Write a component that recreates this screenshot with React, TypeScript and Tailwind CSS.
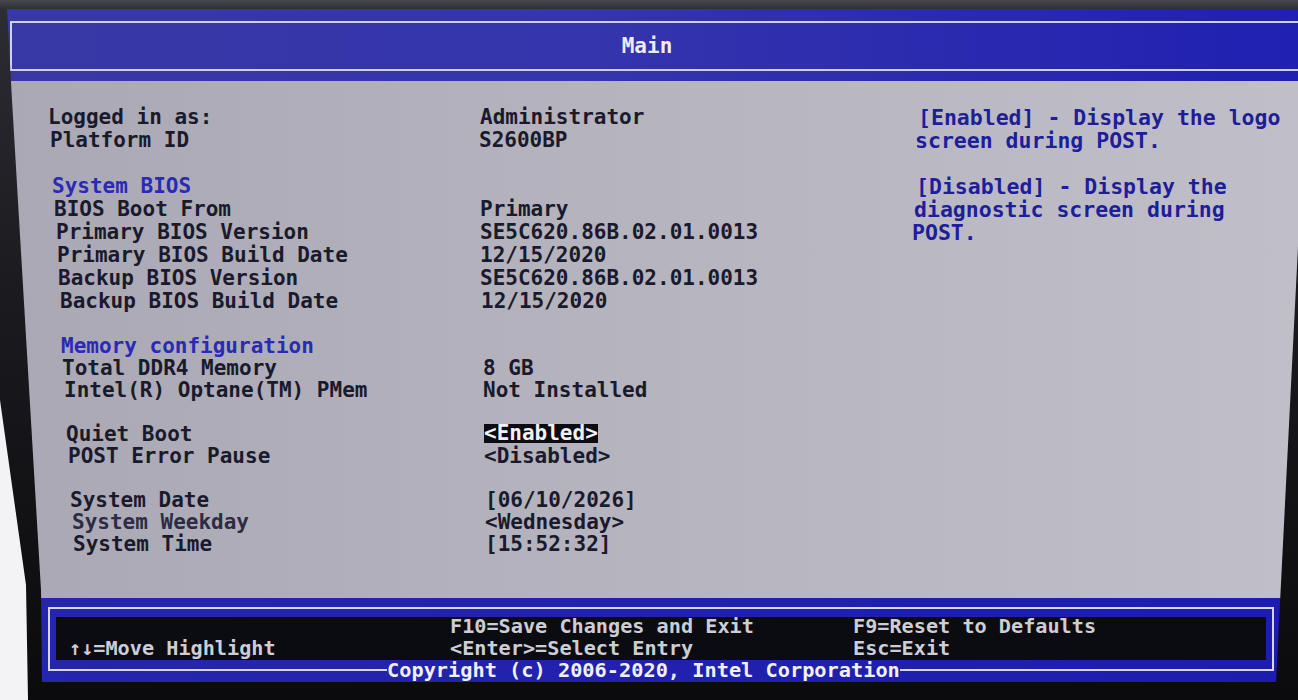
type Row = {
  label?: string;
  value?: string;
  pl?: string;
  lw?: string;
  h: string;
  kind?: "head" | "dim" | "sel";
};

const rows: Row[] = [
  { label: "Logged in as:", value: "Administrator", pl: "pl-[48px]", lw: "w-[432px]", h: "h-[23px] leading-[23px]" },
  { label: "Platform ID", value: "S2600BP", pl: "pl-[50px]", lw: "w-[429px]", h: "h-[23px] leading-[23px]" },
  { h: "h-[23px]" },
  { label: "System BIOS", pl: "pl-[52px]", h: "h-[23px] leading-[23px]", kind: "head" },
  { label: "BIOS Boot From", value: "Primary", pl: "pl-[54px]", lw: "w-[426px]", h: "h-[23px] leading-[23px]" },
  { label: "Primary BIOS Version", value: "SE5C620.86B.02.01.0013", pl: "pl-[56px]", lw: "w-[424px]", h: "h-[23px] leading-[23px]" },
  { label: "Primary BIOS Build Date", value: "12/15/2020", pl: "pl-[57px]", lw: "w-[423px]", h: "h-[23px] leading-[23px]" },
  { label: "Backup BIOS Version", value: "SE5C620.86B.02.01.0013", pl: "pl-[58px]", lw: "w-[422px]", h: "h-[23px] leading-[23px]" },
  { label: "Backup BIOS Build Date", value: "12/15/2020", pl: "pl-[60px]", lw: "w-[421px]", h: "h-[23px] leading-[23px]" },
  { h: "h-[22px]" },
  { label: "Memory configuration", pl: "pl-[61px]", h: "h-[22px] leading-[22px]", kind: "head" },
  { label: "Total DDR4 Memory", value: "8 GB", pl: "pl-[62px]", lw: "w-[421px]", h: "h-[22px] leading-[22px]" },
  { label: "Intel(R) Optane(TM) PMem", value: "Not Installed", pl: "pl-[64px]", lw: "w-[419px]", h: "h-[22px] leading-[22px]" },
  { h: "h-[22px]" },
  { label: "Quiet Boot", value: "<Enabled>", pl: "pl-[66px]", lw: "w-[418px]", h: "h-[22px] leading-[22px]", kind: "sel" },
  { label: "POST Error Pause", value: "<Disabled>", pl: "pl-[68px]", lw: "w-[416px]", h: "h-[22px] leading-[22px]" },
  { h: "h-[22px]" },
  { label: "System Date", value: "[06/10/2026]", pl: "pl-[70px]", lw: "w-[415px]", h: "h-[22px] leading-[22px]" },
  { label: "System Weekday", value: "<Wednesday>", pl: "pl-[72px]", lw: "w-[413px]", h: "h-[22px] leading-[22px]", kind: "dim" },
  { label: "System Time", value: "[15:52:32]", pl: "pl-[73px]", lw: "w-[412px]", h: "h-[22px] leading-[22px]" },
];

const help = [
  { text: "[Enabled] - Display the logo", pl: "pl-[6px]" },
  { text: "screen during POST.", pl: "pl-[3px]" },
  { text: "", pl: "" },
  { text: "[Disabled] - Display the", pl: "pl-[4px]" },
  { text: "diagnostic screen during", pl: "pl-[2px]" },
  { text: "POST.", pl: "pl-0" },
];

export default function App() {
  return (
    <div className="h-[700px] w-[1298px] overflow-hidden bg-[#f3f3f5] [font-family:'DejaVu_Sans_Mono','Liberation_Mono',monospace]">
      {/* monitor bezel */}
      <div className="h-full w-full bg-[linear-gradient(180deg,#46464e_0px,#2c2c33_10px,#1b1b20_40%,#0b0b0d_100%)] [clip-path:polygon(0_0,100%_0,100%_100%,28px_100%,26px_585px,0_400px)]">
        {/* screen */}
        <div className="flex h-full w-full flex-col pt-[9px] [clip-path:polygon(7px_9px,1310px_9px,1276px_682px,42px_682px,41px_590px,12px_100px)]">
          <header className="h-[72px] shrink-0 pl-[10px] pt-[12px] bg-[linear-gradient(90deg,#3838a6_0%,#3535ad_45%,#2020b2_100%)]">
            <div className="h-[50px] w-[1320px] border-y-2 border-l-2 border-[#d0d0ee]">
              <div className="flex h-full w-[1270px] items-center justify-center pt-[2px] text-[21px] font-bold text-[#ececf6]">
                Main
              </div>
            </div>
          </header>

          <main className="flex h-[517px] shrink-0 pt-[24.5px] text-[21px] font-bold bg-[linear-gradient(90deg,#a9a8b4_0%,#b4b3be_45%,#c0bfc9_100%)]">
            <div className="flex w-[912px] shrink-0 flex-col">
              {rows.map((r, i) => (
                <div key={i} className={`flex whitespace-pre ${r.h} ${r.pl ?? ""}`}>
                  {r.label && (
                    <span
                      className={`shrink-0 ${r.lw ?? ""} ${
                        r.kind === "head"
                          ? "text-[#2a2ab6]"
                          : r.kind === "dim"
                          ? "text-[#2c2c44]"
                          : "text-[#1a1a2c]"
                      }`}
                    >
                      {r.label}
                    </span>
                  )}
                  {r.value &&
                    (r.kind === "sel" ? (
                      <span className="h-[19px] self-center bg-[#0c0c12] leading-[19px] text-[#f2f2f6]">{r.value}</span>
                    ) : (
                      <span className="text-[#1a1a2c]">{r.value}</span>
                    ))}
                </div>
              ))}
            </div>

            <div className="flex flex-col text-[21.5px] text-[#1e1e98]">
              {help.map((h, i) => (
                <div key={i} className={`h-[23px] whitespace-pre leading-[23px] ${h.pl}`}>
                  {h.text}
                </div>
              ))}
            </div>
          </main>

          <footer className="h-[84px] shrink-0 pl-[48px] pt-[9px] bg-[linear-gradient(90deg,#2626ac_0%,#1c1cb0_100%)]">
            <div className="flex w-[1226px] flex-col border-x-2 border-t-2 border-[#d6d6ec]">
              <div className="mx-[6px] mt-[8px] flex h-[43px] bg-[#0b0b12] pl-[13px] text-[20.2px] font-bold leading-[22px] text-[#cdcdd6]">
                <div className="-mt-[2px] flex w-[381px] flex-col whitespace-pre">
                  <span>&nbsp;</span>
                  <span>↑↓=Move Highlight</span>
                </div>
                <div className="-mt-[2px] flex w-[403px] flex-col whitespace-pre">
                  <span>F10=Save Changes and Exit</span>
                  <span>&lt;Enter&gt;=Select Entry</span>
                </div>
                <div className="-mt-[2px] flex flex-col whitespace-pre">
                  <span>F9=Reset to Defaults</span>
                  <span>Esc=Exit</span>
                </div>
              </div>
              <div className="-mb-[9px] flex h-[20px] items-center">
                <div className="h-[2px] w-[337px] bg-[#d6d6ec]" />
                <span className="whitespace-pre text-[20.3px] font-bold leading-[20px] text-[#f0f0f6]">
                  Copyright (c) 2006-2020, Intel Corporation
                </span>
                <div className="h-[2px] flex-1 bg-[#d6d6ec]" />
              </div>
            </div>
          </footer>
        </div>
      </div>
    </div>
  );
}
